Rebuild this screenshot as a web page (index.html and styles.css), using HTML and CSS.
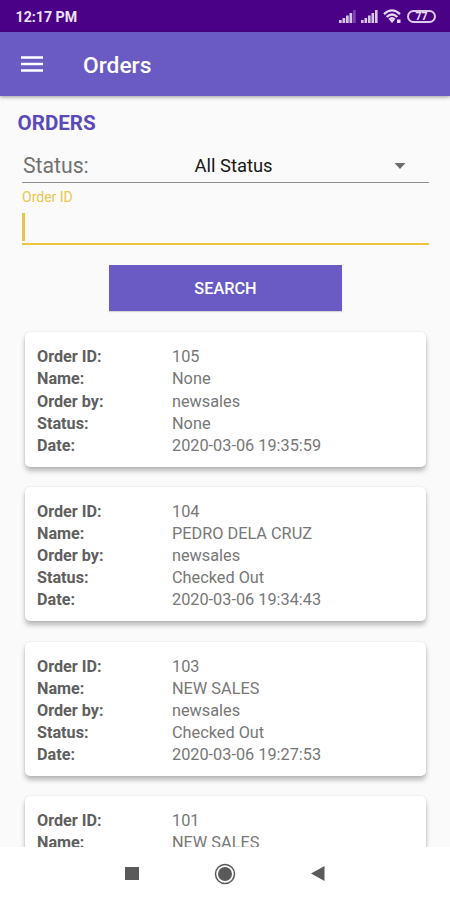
FILE: index.html
```html
<!DOCTYPE html>
<html lang="en">

<head>
  <meta charset="UTF-8">
  <meta name="viewport" content="width=device-width, initial-scale=1.0">
  <title>Orders</title>
  <link rel="stylesheet" href="styles.css">
</head>

<body>
  <!-- Status bar -->
  <div class="status-bar">
    <span class="clock">12:17 PM</span>
    <div class="status-icons">
      <svg class="signal" width="17" height="13" viewBox="0 0 17 13">
        <path d="M0 10h2.700v3H0zM3.500 8h2.700v5h-2.700zM7 5.500h2.700V13H7zM10.500 3h2.700v10h-2.700z" />
        <path d="M14 0h2.700v13h-2.700z" opacity=".35" />
      </svg>
      <svg class="signal" width="17" height="13" viewBox="0 0 17 13">
        <path d="M0 10h2.600v3H0zM3.500 8h2.600v5h-2.600zM7 5.500h2.600V13H7zM10.500 3h2.600v10h-2.600zM14 0h2.600v13h-2.600z" />
      </svg>
      <svg class="wifi" width="19" height="15" viewBox="0 0 19 15">
        <g fill="none" stroke="#e6d8f3" stroke-width="2.300">
          <path d="M1 5.200Q9 -2.400 17 5.200" />
          <path d="M3.700 8Q9 3 14.300 8" />
          <path d="M6.200 10.500Q9 8 11.800 10.500" />
        </g>
        <path d="M6.500 11Q9 9.500 11.500 11L9 14zM14 10.500h3.500v3.500H14z" fill="#e6d8f3" />
      </svg>
      <span class="battery">77</span>
    </div>
  </div>

  <!-- App bar -->
  <header class="app-bar">
    <svg class="menu" width="22" height="16" viewBox="0 0 22 16">
      <path d="M0 1.500h22M0 8h22M0 14.500h22" stroke="#fff" stroke-width="2.400" />
    </svg>
    <h1>Orders</h1>
  </header>

  <main>
    <h2>ORDERS</h2>
    <form class="search-form">
      <div class="status-field">
        <span class="label">Status:</span>
        <span class="value">All Status</span>
        <svg class="arrow" width="12" height="6" viewBox="0 0 12 6">
          <path d="M.5 0h11L6 6z" fill="#6e6e6e" />
        </svg>
      </div>
      <div class="id-field">
        <label>Order ID</label>
        <div class="caret"></div>
      </div>
      <button type="button">SEARCH</button>
    </form>

    <section class="orders">
      <dl class="card">
        <dt>Order ID:</dt><dd>105</dd>
        <dt>Name:</dt><dd>None</dd>
        <dt>Order by:</dt><dd>newsales</dd>
        <dt>Status:</dt><dd>None</dd>
        <dt>Date:</dt><dd>2020-03-06 19:35:59</dd>
      </dl>
      <dl class="card">
        <dt>Order ID:</dt><dd>104</dd>
        <dt>Name:</dt><dd>PEDRO DELA CRUZ</dd>
        <dt>Order by:</dt><dd>newsales</dd>
        <dt>Status:</dt><dd>Checked Out</dd>
        <dt>Date:</dt><dd>2020-03-06 19:34:43</dd>
      </dl>
      <dl class="card">
        <dt>Order ID:</dt><dd>103</dd>
        <dt>Name:</dt><dd>NEW SALES</dd>
        <dt>Order by:</dt><dd>newsales</dd>
        <dt>Status:</dt><dd>Checked Out</dd>
        <dt>Date:</dt><dd>2020-03-06 19:27:53</dd>
      </dl>
      <dl class="card">
        <dt>Order ID:</dt><dd>101</dd>
        <dt>Name:</dt><dd>NEW SALES</dd>
      </dl>
    </section>
  </main>

  <!-- System navigation -->
  <nav>
    <svg width="14" height="13" viewBox="0 0 14 13">
      <path d="M0 0h14v13H0z" fill="#5a5a5a" />
    </svg>
    <svg width="22" height="22" viewBox="0 0 22 22">
      <circle cx="11" cy="11" r="9.500" fill="none" stroke="#5a5a5a" stroke-width="1.500" />
      <circle cx="11" cy="11" r="7" fill="#5a5a5a" />
    </svg>
    <svg width="14" height="15" viewBox="0 0 14 15">
      <path d="M0 7.500L13.500 0v15z" fill="#5a5a5a" />
    </svg>
  </nav>
</body>

</html>
```

FILE: styles.css
```css
* {
  margin: 0;
  padding: 0;
  box-sizing: border-box;
}

body {
  width: 450px;
  height: 900px;
  display: flex;
  flex-direction: column;
  overflow: hidden;
  font-family: Roboto, sans-serif;
  background: #fafafa;
}

svg {
  display: block;
}

/* Status bar */
.status-bar {
  height: 32px;
  flex: none;
  display: flex;
  align-items: center;
  justify-content: space-between;
  padding: 1px 14px 0 15.5px;
  background: #4b0088;
}

.clock {
  font-size: 14.2px;
  font-weight: 700;
  color: #eee3f7;
}

.status-icons {
  display: flex;
  align-items: center;
  gap: 5px;
}

.signal {
  fill: #d8c6ea;
}

.battery {
  width: 29px;
  height: 13px;
  border: 2px solid #dccbed;
  border-radius: 7px;
  font-size: 10.5px;
  font-weight: 700;
  line-height: 10px;
  text-align: center;
  color: #f0e6f8;
}

/* App bar */
.app-bar {
  height: 64px;
  flex: none;
  display: flex;
  align-items: center;
  gap: 40px;
  padding-left: 21px;
  color: #fff;
  background: #695ac4;
  box-shadow: 0 1px 4px rgba(0, 0, 0, 0.4);
  z-index: 1;
}

.app-bar h1 {
  font-size: 22.8px;
  font-weight: 500;
  padding-top: 2px;
}

main {
  flex: 1;
  min-height: 0;
  overflow: hidden;
  padding: 14px 21px 0 22px;
}

h2 {
  margin-left: -4.5px;
  font-size: 20.6px;
  font-weight: 700;
  line-height: 26px;
  color: #5b49b9;
}

/* Search form */
.status-field {
  display: flex;
  align-items: center;
  height: 47px;
  padding: 13px 23px 0 1px;
  border-bottom: 1px solid #8d8d8d;
}

.status-field .label {
  width: 171.5px;
  font-size: 21.2px;
  color: #727272;
}

.status-field .value {
  flex: 1;
  font-size: 18.4px;
  color: #171717;
}

.id-field {
  height: 62px;
  padding-top: 6px;
  border-bottom: 2px solid #ebc63c;
}

.id-field label {
  display: block;
  font-size: 14px;
  line-height: 17px;
  color: #e6c84f;
}

.caret {
  width: 2.5px;
  height: 28px;
  margin-top: 7px;
  background: #ebc63c;
}

button {
  display: block;
  width: 233px;
  height: 46px;
  margin: 20px 0 0 87px;
  border: none;
  font: 500 16.3px Roboto, sans-serif;
  color: #fff;
  background: #695ac4;
  box-shadow: 0 1px 1px rgba(0, 0, 0, 0.15);
}

/* Order cards */
.orders {
  display: flex;
  flex-direction: column;
  gap: 20.2px;
  padding: 21.400px 3px 0;
}

.card {
  display: grid;
  grid-template-columns: 135px 1fr;
  grid-auto-rows: 22.1px;
  align-content: start;
  flex: none;
  height: 134.400px;
  padding: 14px 12px 0;
  font-size: 16.3px;
  line-height: 22.1px;
  background: #fff;
  border-radius: 5px;
  box-shadow: 0 4px 5px rgba(0, 0, 0, 0.26), 0 0 2px rgba(0, 0, 0, 0.12);
}

.card dt {
  font-size: 16.2px;
  font-weight: 700;
  color: #5f5f5f;
}

.card dd {
  color: #777;
}

/* System navigation */
nav {
  height: 53px;
  flex: none;
  display: flex;
  align-items: center;
  justify-content: space-between;
  padding: 0 125px;
  background: #fff;
}
```
